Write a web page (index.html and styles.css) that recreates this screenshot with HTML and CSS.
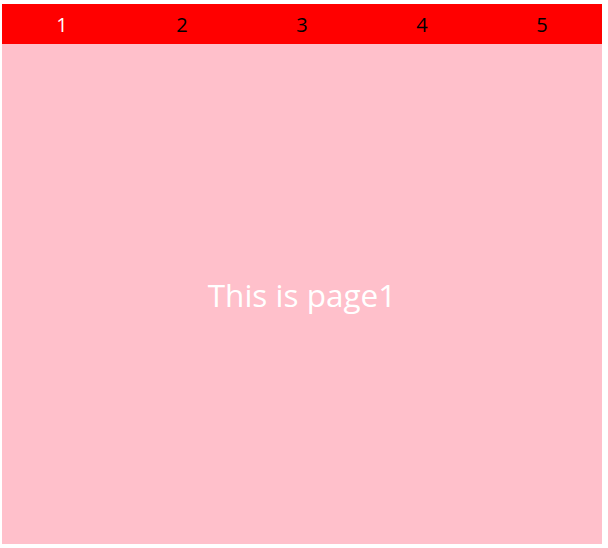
FILE: index.html
```html
<!DOCTYPE html>
<html>
<head>
<meta charset="utf-8">
<link rel="stylesheet" href="styles.css">
</head>
<body>
<div class="app">
  <div class="tabs">
    <div class="tab active">1</div>
    <div class="tab">2</div>
    <div class="tab">3</div>
    <div class="tab">4</div>
    <div class="tab">5</div>
  </div>
  <div class="page">This is page1</div>
</div>
</body>
</html>
```
FILE: styles.css
```css
html, body { background: #fff; }
body {
  margin: 4px 0 0 2px;
  font-family: "Open Sans", "Noto Sans CJK SC", sans-serif;
}
.app {
  width: 600px;
  height: 540px;
  display: flex;
  flex-direction: column;
}
.tabs {
  height: 40px;
  background: #ff0000;
  display: flex;
}
.tab {
  flex: 1;
  display: flex;
  align-items: center;
  justify-content: center;
  font-size: 20px;
  color: #000;
}
.tab.active { color: #fff; }
.page {
  flex: 1;
  background: #ffc0cb;
  display: flex;
  align-items: center;
  justify-content: center;
  color: #fff;
  font-size: 31.5px;
}
```
